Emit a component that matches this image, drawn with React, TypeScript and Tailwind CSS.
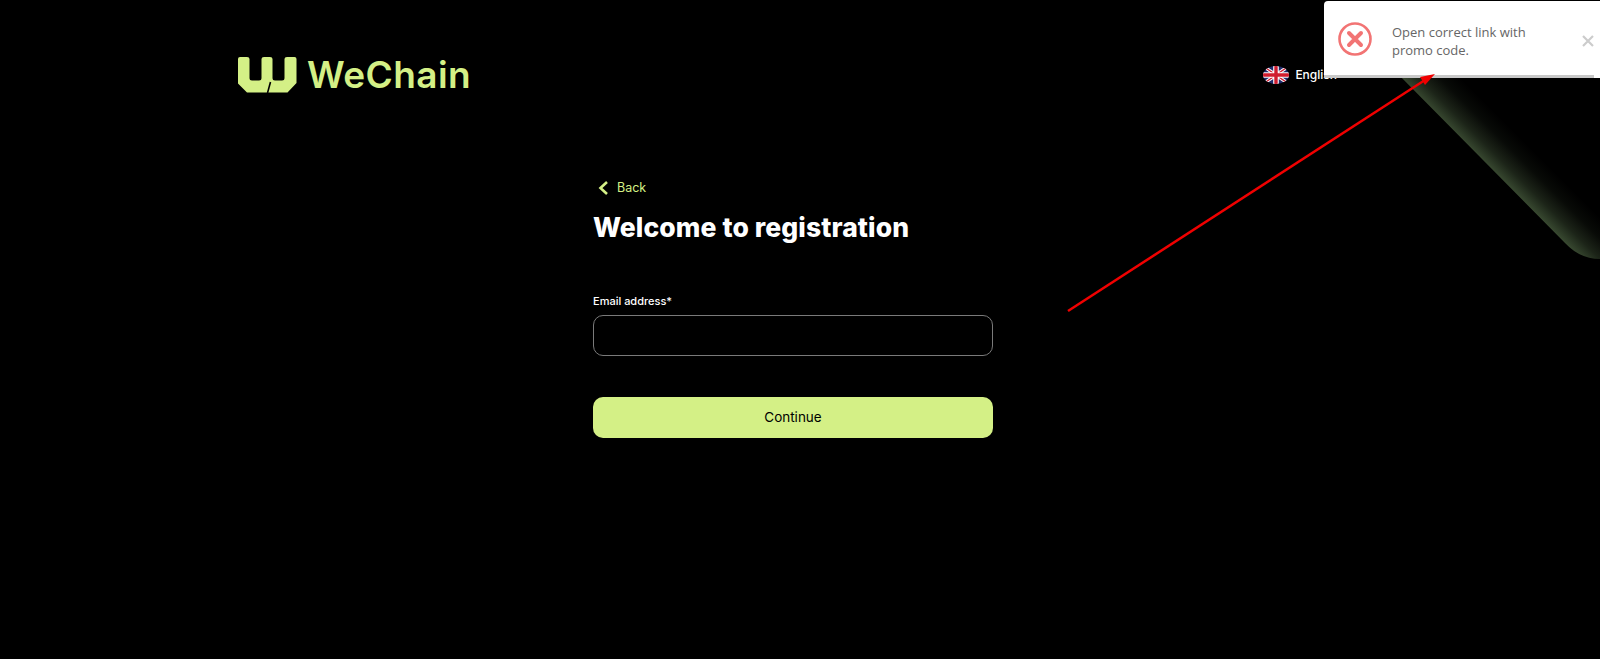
import React from "react";

function Logo() {
  return (
    <svg width="59" height="36" viewBox="0 0 59 36" fill="#d4f086" className="mt-[1px]">
      <path d="M2 0H9Q11.500 0 11.500 2V21Q11.500 23.500 14 23.500H21Q23.500 23.500 23.500 21V2Q23.500 0 26 0H32Q34.500 0 34.500 2V21Q34.500 23.500 37 23.500H44Q46.500 23.500 46.500 21V2Q46.500 0 49 0H56.500Q58.500 0 58.500 2V26L49.500 35.500H9L0 26.500V2Q0 0 2 0Z" />
      <path d="M32.500 25L29.500 36" stroke="#000" strokeWidth="1.6" fill="none" />
    </svg>
  );
}

function Flag() {
  return (
    <svg width="26" height="18" viewBox="0 0 26 18" className="shrink-0">
      <defs>
        <clipPath id="fl"><ellipse cx="13" cy="9" rx="13" ry="9" /></clipPath>
      </defs>
      <g clipPath="url(#fl)">
        <rect width="26" height="18" fill="#1f2a6b" />
        <path d="M0 0L26 18M26 0L0 18" stroke="#fff" strokeWidth="3.4" />
        <path d="M0 0L26 18M26 0L0 18" stroke="#d01c2e" strokeWidth="1.4" />
        <path d="M13 0V18M0 9H26" stroke="#fff" strokeWidth="5.6" />
        <path d="M13 0V18M0 9H26" stroke="#d01c2e" strokeWidth="3.4" />
      </g>
    </svg>
  );
}

function Glow() {
  return (
    <svg className="absolute right-0 top-0" width="240" height="270" viewBox="1360 0 240 270">
      <defs>
        <linearGradient id="g" gradientUnits="userSpaceOnUse" x1="1490" y1="167" x2="1520" y2="137">
          <stop offset="0" stopColor="#37472f" />
          <stop offset="0.3" stopColor="#1c2418" />
          <stop offset="0.65" stopColor="#080a07" />
          <stop offset="1" stopColor="#000" />
        </linearGradient>
      </defs>
      <path d="M1394 70L1565 243Q1580 259 1600 259V0H1394Z" fill="url(#g)" />
    </svg>
  );
}

export default function App() {
  return (
    <div className="relative h-[659px] w-full overflow-hidden bg-black font-['Inter',sans-serif]">
      <Glow />
      <header className="relative flex items-center justify-between pl-[238px] pr-[263px] pt-[56px]">
        <div className="flex items-center gap-[10px]">
          <Logo />
          <span className="text-[37px] font-semibold leading-[37px] tracking-[0.4px] text-[#d4f086]">WeChain</span>
        </div>
        <div className="flex items-center gap-[6px] text-[12px] text-white">
          <Flag />
          <span className="font-medium">English</span>
        </div>
      </header>

      <main className="relative ml-[593px] mt-[87px] w-[400px]">
        <div className="flex items-center gap-[9px] pl-[5px] text-[#d4f086]">
          <svg width="10" height="14" viewBox="0 0 10 14" fill="none" stroke="currentColor" strokeWidth="2.6">
            <path d="M9 1L2.500 7L9 13" />
          </svg>
          <span className="text-[12.5px] leading-[16px]">Back</span>
        </div>
        <h1 className="mt-[15px] text-[26.5px] font-extrabold leading-[32px] tracking-[0.1px] text-white">Welcome to registration</h1>
        <label className="mt-[51px] block text-[11px] font-medium leading-[14px] text-white">Email address*</label>
        <input className="mt-[7px] block h-[41px] w-full rounded-[10px] border border-[#7a7a7a] bg-black" />
        <button className="mt-[41px] block h-[41px] w-full rounded-[10px] bg-[#d4f086] text-[13.5px] text-black">Continue</button>
      </main>

      <div className="absolute right-0 top-[1px] h-[77px] w-[276px] overflow-hidden rounded-tl-[4px] bg-white font-['Open_Sans',sans-serif]">
        <div className="flex h-[74px] items-center pt-[2px]">
          <svg width="34" height="34" viewBox="0 0 34 34" fill="none" className="ml-[14px] shrink-0">
            <circle cx="17" cy="17" r="15.5" stroke="#f27474" strokeWidth="2.6" />
            <path d="M11 11L23 23M23 11L11 23" stroke="#f27474" strokeWidth="4" strokeLinecap="round" />
          </svg>
          <p className="ml-[20px] mt-[4px] w-[150px] text-[13px] leading-[18.500px] text-[#666]">Open correct link with promo code.</p>
          <svg width="12" height="12" viewBox="0 0 12 12" className="ml-[40px] mt-[4px] shrink-0">
            <path d="M1 1L11 11M11 1L1 11" stroke="#ccc" strokeWidth="2.200" />
          </svg>
        </div>
        <div className="h-[3px] w-[270px] bg-[#c8c8c8]" />
      </div>

      <svg className="absolute left-0 top-0" width="1600" height="659">
        <path d="M1068 311L1425 80" stroke="#f00000" strokeWidth="2.500" />
        <path d="M1435 74L1420 77L1425 85Z" fill="#f00000" />
      </svg>
    </div>
  );
}
